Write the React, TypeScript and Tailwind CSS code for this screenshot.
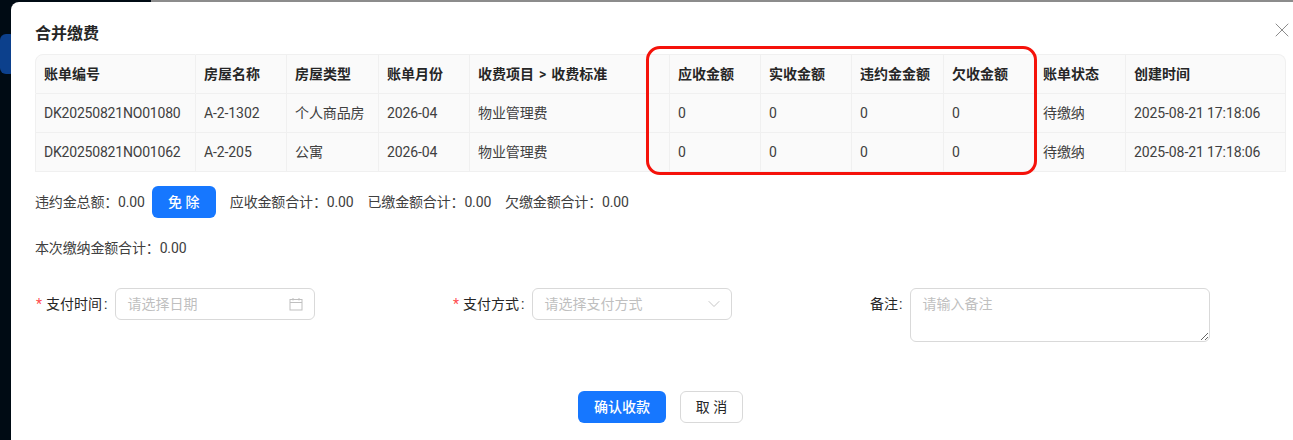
import { ChevronDown, X } from 'lucide-react';

const columns = [
  { title: '账单编号', width: 'w-[161px]' },
  { title: '房屋名称', width: 'w-[91px]' },
  { title: '房屋类型', width: 'w-[92px]' },
  { title: '账单月份', width: 'w-[91px]' },
  { title: '收费项目 > 收费标准', width: 'w-[200px]' },
  { title: '应收金额', width: 'w-[91px]' },
  { title: '实收金额', width: 'w-[91px]' },
  { title: '违约金金额', width: 'w-[92px]' },
  { title: '欠收金额', width: 'w-[91px]' },
  { title: '账单状态', width: 'w-[91px]' },
  { title: '创建时间', width: 'w-[160px]' },
];

const rows = [
  ['DK20250821NO01080', 'A-2-1302', '个人商品房', '2026-04', '物业管理费', '0', '0', '0', '0', '待缴纳', '2025-08-21 17:18:06'],
  ['DK20250821NO01062', 'A-2-205', '公寓', '2026-04', '物业管理费', '0', '0', '0', '0', '待缴纳', '2025-08-21 17:18:06'],
];

function CalendarIcon() {
  return (
    <svg width="14" height="14" viewBox="0 0 14 14" fill="none" stroke="#bfbfbf" strokeWidth="1">
      <rect x="1" y="2.5" width="12" height="10.5" />
      <path d="M1 5.5h12M4 1v2.5M10 1v2.5" />
    </svg>
  );
}

function FieldLabel({ text, required }: { text: string; required?: boolean }) {
  return (
    <label className="flex h-8 items-center text-sm text-[#262626]">
      {required && <span className="mr-[4px] ml-px text-[#ff4d4f]">*</span>}
      {text}
      <span className={required ? 'mr-2 ml-0.5' : 'mr-2 ml-px'}>:</span>
    </label>
  );
}

function App() {
  return (
    <div className="relative h-[440px] w-[1293px] overflow-hidden bg-[#000b14] font-['Roboto','Noto_Sans_CJK_SC',sans-serif] text-sm text-[#404040]">
      <div className="absolute top-0 left-[151px] h-[2px] w-[1142px] bg-[#8c8c8c]" />
      <div className="absolute top-[34px] left-0 h-[40px] w-[16px] rounded-md bg-[#0c408c]" />

      <div className="relative mt-[2px] ml-[11px] h-[460px] w-[1300px] rounded-lg bg-white pt-[21px] pl-[24px]">
        <h2 className="h-[31px] text-base leading-[21px] font-semibold text-[#262626]">合并缴费</h2>
        <button className="absolute top-[16px] left-[1259px] text-[#8c8c8c]">
          <X size={24} strokeWidth={1} />
        </button>

        <table className="w-[1251px] table-fixed border-separate border-spacing-0">
          <thead>
            <tr>
              {columns.map((col, i) => (
                <th
                  key={col.title}
                  className={`${col.width} h-[40px] border-y border-r border-[#f0f0f0] bg-[#fafafa] pl-[8px] text-left font-semibold text-[#262626] [word-spacing:1.5px] ${i === 0 ? 'rounded-tl-lg border-l' : ''} ${i === columns.length - 1 ? 'rounded-tr-lg' : ''}`}
                >
                  {col.title}
                </th>
              ))}
            </tr>
          </thead>
          <tbody>
            {rows.map((row) => (
              <tr key={row[0]}>
                {row.map((cell, i) => (
                  <td
                    key={i}
                    className={`h-[39px] border-r border-b border-[#f0f0f0] bg-[#fafafa] pl-[8px] whitespace-nowrap ${i === 0 ? 'border-l tracking-[-0.2px]' : 'tracking-[-0.1px]'}`}
                  >
                    {cell}
                  </td>
                ))}
              </tr>
            ))}
          </tbody>
        </table>

        <div className="mt-[14px] flex h-8 items-center tracking-[-0.15px]">
          <span>违约金总额：0.00</span>
          <button className="mr-[14px] ml-[7px] h-8 w-16 rounded-md bg-[#1677ff] font-medium tracking-normal text-white">免 除</button>
          <span>应收金额合计：0.00</span>
          <span className="ml-[14px]">已缴金额合计：0.00</span>
          <span className="ml-[14px]">欠缴金额合计：0.00</span>
        </div>

        <div className="mt-[19px] h-[22px] leading-[22px] tracking-[-0.15px]">本次缴纳金额合计：0.00</div>

        <div className="mt-[29px] grid h-[71px] w-[1251px] grid-cols-3">
          <div className="flex items-start">
            <FieldLabel text="支付时间" required />
            <div className="flex h-8 w-[200px] items-center rounded-md border border-[#d9d9d9] px-[11px]">
              <input
                placeholder="请选择日期"
                className="w-full min-w-0 flex-1 outline-none placeholder:text-[#bfbfbf]"
              />
              <CalendarIcon />
            </div>
          </div>
          <div className="flex items-start">
            <FieldLabel text="支付方式" required />
            <div className="flex h-8 w-[200px] items-center rounded-md border border-[#d9d9d9] px-[11px]">
              <span className="flex-1 text-[#bfbfbf]">请选择支付方式</span>
              <ChevronDown size={20} strokeWidth={1.1} className="-mr-[4px] text-[#bfbfbf]" />
            </div>
          </div>
          <div className="flex items-start pl-px">
            <FieldLabel text="备注" />
            <textarea
              placeholder="请输入备注"
              className="h-[54px] w-[300px] rounded-md border border-[#d9d9d9] px-[11px] py-[4px] leading-[22px] outline-none placeholder:text-[#bfbfbf]"
            />
          </div>
        </div>

        <div className="mt-[32px] ml-[543px] flex gap-[14px]">
          <button className="h-8 w-[88px] rounded-md bg-[#1677ff] font-medium text-white">确认收款</button>
          <button className="h-8 w-[63px] rounded-md border border-[#d9d9d9] bg-white text-[#262626]">取 消</button>
        </div>
      </div>

      <div className="absolute top-[46px] left-[646px] h-[129px] w-[391px] rounded-[14px] border-[3px] border-[#f5120a]" />
    </div>
  );
}

export default App;
